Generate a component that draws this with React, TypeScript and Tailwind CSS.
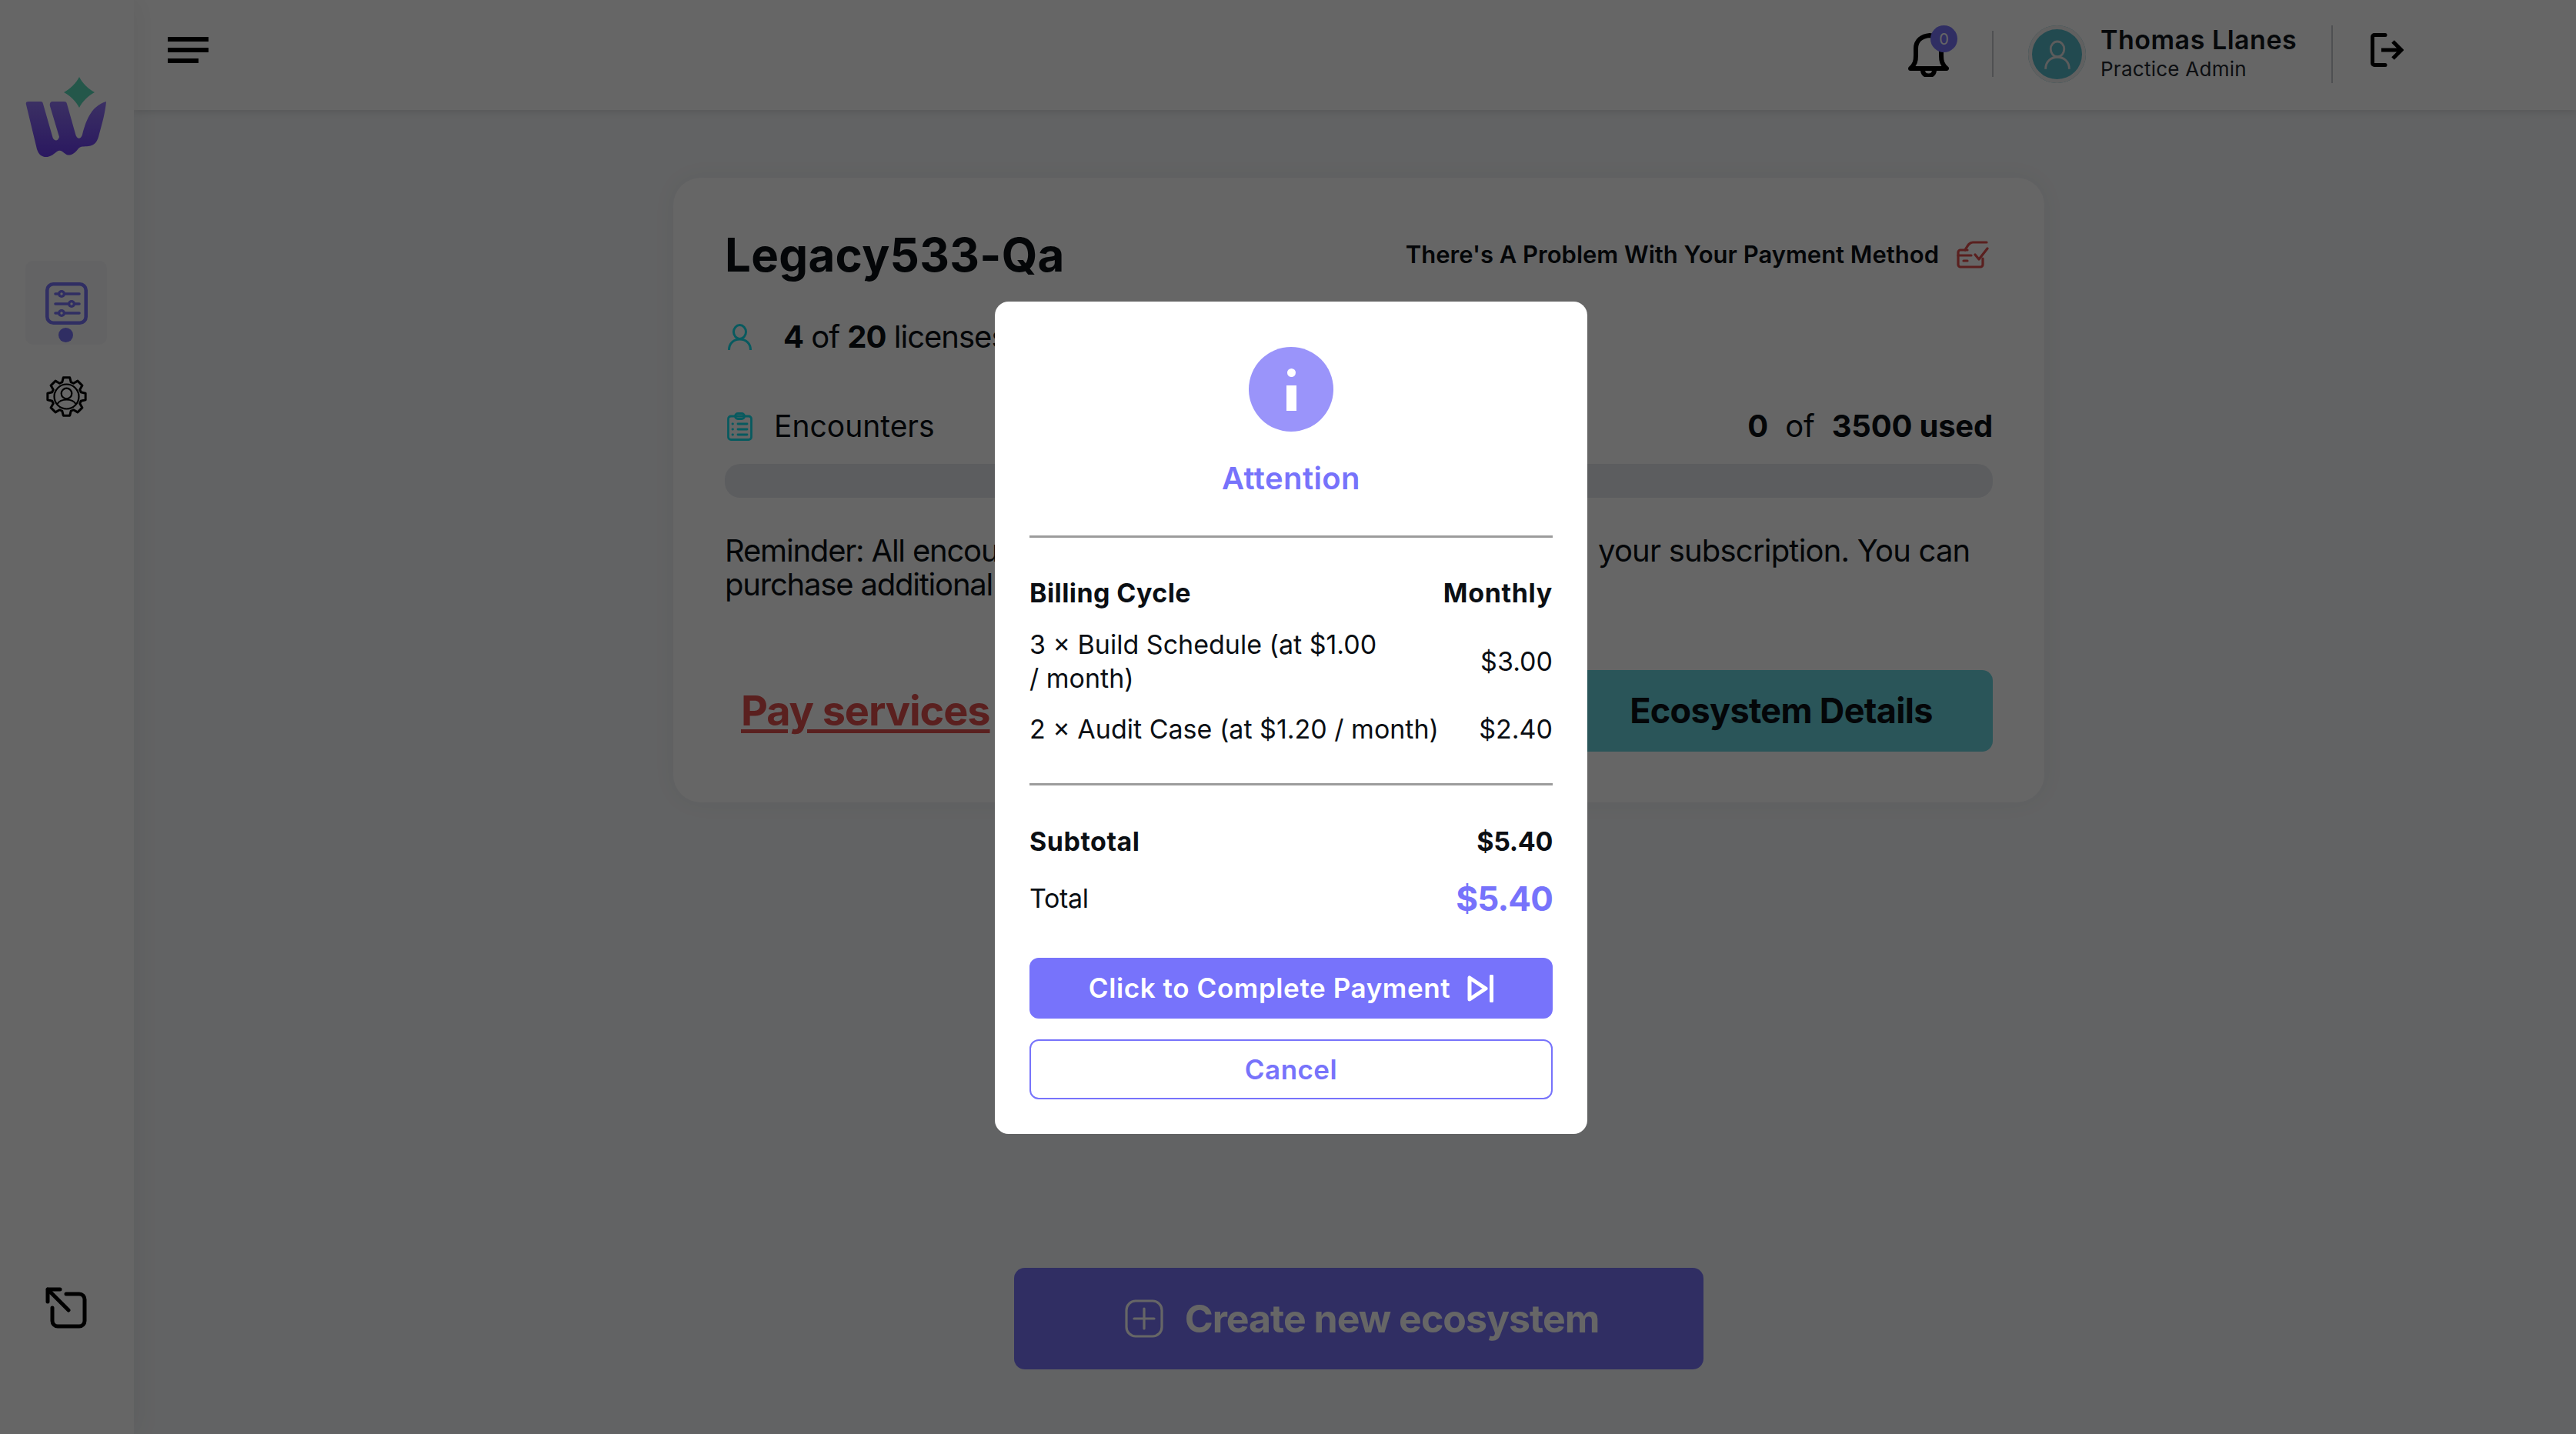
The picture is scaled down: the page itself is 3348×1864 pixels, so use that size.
import React from "react";

const gearPath = (() => {
  const n = 8, c = 27.5, R = 25, r = 19.5;
  const pts: string[] = [];
  for (let i = 0; i < n; i++) {
    const a = (i * 2 * Math.PI) / n - Math.PI / 2;
    const t = 0.17, u = 0.3;
    const p = (ang: number, rad: number) => `${(c + rad * Math.cos(ang)).toFixed(2)} ${(c + rad * Math.sin(ang)).toFixed(2)}`;
    pts.push(`${i === 0 ? "M" : "L"}${p(a - u, r)}`);
    pts.push(`L${p(a - t, R)}`);
    pts.push(`L${p(a + t, R)}`);
    pts.push(`L${p(a + u, r)}`);
    pts.push(`A${r} ${r} 0 0 1 ${p(a + Math.PI / 4 - u, r)}`);
  }
  return pts.join(" ") + "Z";
})();

const Logo = () => (
  <svg width="105" height="104" viewBox="0 0 105 104" className="block">
    <defs>
      <linearGradient id="wg" x1="0" y1="32" x2="0" y2="104" gradientUnits="userSpaceOnUse">
        <stop offset="0" stopColor="#9478f8" />
        <stop offset="1" stopColor="#6a3cf0" />
      </linearGradient>
    </defs>
    <path d="M70 0C74 8 82 16 90 20C82 24 74 32 70 40C66 32 58 24 50 20C58 16 66 8 70 0Z" fill="#5ad9b9" />
    <path
      d="M1 36C0 33 2 32 4 32H20C22 32 22.5 33 23 35L35 77C36 83 42 85 44 78L32 38C31 34 33 32 35 32H50C53 32 53.5 33 54 35L65 74C66.5 81 72 82 74 75C78 60 84 38 105 32C104 45 100 60 96 74C94 84 90 89 82 90C76 90.5 72 90 69 93C64 100 57 104 52 100C48 97 45 94 41 97C36 101 31 105 25 104C20 103 17 100 15 94Z"
      fill="url(#wg)"
    />
  </svg>
);

const SlidersNav = () => (
  <svg width="55" height="55" viewBox="0 0 55 55" fill="none" className="block">
    <rect x="2.3" y="2.3" width="50.4" height="50.4" rx="8" stroke="#7873f8" strokeWidth="4.6" />
    <g stroke="#7873f8" strokeWidth="3.6" strokeLinecap="round">
      <path d="M13 15H44M13 28H44M13 40H44" />
    </g>
    <g fill="#7873f8">
      <circle cx="21" cy="15" r="5" />
      <circle cx="34" cy="28" r="5" />
      <circle cx="21" cy="40" r="5" />
    </g>
    <g fill="#f4f4f6">
      <circle cx="21" cy="15" r="1.7" />
      <circle cx="34" cy="28" r="1.7" />
      <circle cx="21" cy="40" r="1.7" />
    </g>
  </svg>
);

const GearUser = () => (
  <svg width="55" height="55" viewBox="0 0 55 55" fill="none" stroke="#000" className="block">
    <path d={gearPath} strokeWidth="3" strokeLinejoin="round" />
    <circle cx="27.5" cy="27.5" r="16" strokeWidth="2.2" />
    <circle cx="27.5" cy="23.5" r="6.8" strokeWidth="2.2" />
    <path d="M15.500 37C18 33 23 31.500 27.500 31.500C32 31.500 37 33 39.500 37" strokeWidth="2.2" />
  </svg>
);

const ExpandIcon = () => (
  <svg width="54" height="54" viewBox="0 0 54 54" fill="none" stroke="#000" strokeWidth="5" strokeLinecap="round" strokeLinejoin="round" className="block">
    <path d="M27 9H44a7 7 0 0 1 7 7V44a7 7 0 0 1 -7 7H16a7 7 0 0 1 -7 -7V27" />
    <path d="M30 30L3 3M3 3H19M3 3V19" />
  </svg>
);

const Hamburger = () => (
  <div className="flex flex-col gap-[8px] w-[53px]">
    <div className="h-[6px] w-[53px] bg-black" />
    <div className="h-[6px] w-[53px] bg-black" />
    <div className="h-[6px] w-[40px] bg-black" />
  </div>
);

const Bell = () => (
  <svg width="53" height="58" viewBox="0 0 53 58" fill="none" stroke="#000" strokeWidth="6" strokeLinejoin="round" className="block">
    <path d="M3 47C9 42 10 37 10 30V21C10 10 18 5 28 4C38 5 43 11 43 21V30C43 37 44 42 50 47Z" />
    <path d="M19 49C19 59 34 59 34 49" />
  </svg>
);

const UserLine = ({ w, h, color, sw }: { w: number; h: number; color: string; sw: number }) => (
  <svg width={w} height={h} viewBox="0 0 31 34" fill="none" stroke={color} strokeWidth={sw} className="block">
    <ellipse cx="15.5" cy="10.5" rx="8" ry="9" />
    <path d="M1.5 34C1.5 25 8 20 15.5 20C23 20 29.5 25 29.5 34" />
  </svg>
);

const Logout = () => (
  <svg width="43" height="44" viewBox="0 0 43 44" fill="none" stroke="#000" strokeWidth="5" className="block">
    <path d="M19 2.500H5a2.500 2.500 0 0 0 -2.500 2.500V39a2.500 2.500 0 0 0 2.500 2.500H19" strokeLinecap="round" />
    <path d="M14 22H39M29 11L40 22L29 33" />
  </svg>
);

const PaymentIcon = () => (
  <svg width="42" height="36" viewBox="0 0 42 36" fill="none" stroke="#e0504e" strokeWidth="3.2" strokeLinecap="round" strokeLinejoin="round" className="block">
    <path d="M34 23V31a3 3 0 0 1 -3 3H5a3 3 0 0 1 -3 -3V15a3 3 0 0 1 3 -3H14" />
    <path d="M2 19H19" />
    <path d="M11 12C14 7 16 2 21 2H39" />
    <path d="M24 18L29 24L40 10" />
    <path d="M9 26H14" />
  </svg>
);

const Clipboard = () => (
  <svg width="33" height="37" viewBox="0 0 33 37" fill="none" stroke="#16e0ee" strokeWidth="2.8" strokeLinecap="round" className="block">
    <rect x="1.500" y="5" width="30" height="30.500" rx="3.500" />
    <rect x="10.500" y="1.500" width="12" height="7" rx="3.500" />
    <path d="M14 15H26M14 22H26M14 29H26" />
    <path d="M7 15H7.500M7 22H7.500M7 29H7.500" />
  </svg>
);

const SkipIcon = () => (
  <svg width="34" height="36" viewBox="0 0 34 36" fill="none" stroke="#fff" strokeWidth="5" strokeLinejoin="round" strokeLinecap="round" className="block">
    <path d="M3 4V32L24 18Z" />
    <path d="M31.500 2V34" />
  </svg>
);

const PlusBox = () => (
  <svg width="50" height="50" viewBox="0 0 50 50" fill="none" stroke="#fff" strokeWidth="3.2" strokeLinecap="round" className="block">
    <rect x="2" y="2" width="46" height="46" rx="12" />
    <path d="M25 12V38M12 25H38" />
  </svg>
);

const Row = ({ left, right, cls = "" }: { left: React.ReactNode; right: React.ReactNode; cls?: string }) => (
  <div className={`flex items-center justify-between text-[34px] leading-[44px] ${cls}`}>
    <div>{left}</div>
    <div>{right}</div>
  </div>
);

export default function App() {
  return (
    <div className="relative flex h-[1864px] w-[3348px] overflow-hidden bg-[#f5f7f9] text-[#0b0f14] font-['Inter',sans-serif]">
      <aside className="relative z-10 flex w-[174px] shrink-0 flex-col items-center bg-white pt-[100px] pb-[137px] pr-[3px] shadow-[6px_0_30px_rgba(0,0,0,0.05)]">
        <Logo />
        <div className="mt-[135px] flex h-[109px] w-[106px] flex-col items-center rounded-[10px] bg-[#f7f7f9] pt-[28px]">
          <div className="ml-[2px]">
            <SlidersNav />
          </div>
          <div className="mt-[4px] mr-[1px] h-[19px] w-[19px] rounded-full bg-[#7873f8]" />
        </div>
        <div className="mt-[40px] ml-[2px]">
          <GearUser />
        </div>
        <div className="mt-auto">
          <ExpandIcon />
        </div>
      </aside>

      <main className="flex min-w-0 flex-1 flex-col">
        <header className="flex h-[143px] shrink-0 items-start bg-white pl-[44px] pr-[224px] shadow-[0_2px_10px_rgba(0,0,0,0.12)]">
          <div className="mt-[48px]">
            <Hamburger />
          </div>
          <div className="ml-auto flex items-start">
            <div className="relative mt-[42px] h-[58px] w-[53px]">
              <Bell />
              <div className="absolute -top-[9px] left-[29px] flex h-[35px] w-[35px] items-center justify-center rounded-full bg-[#7873f8] text-[20px] leading-none text-white">
                0
              </div>
            </div>
            <div className="ml-[56px] mt-[40px] h-[60px] w-[2px] bg-[#c5c9ce]" />
            <div className="ml-[45px] mt-[33px] flex h-[75px] w-[75px] items-center justify-center rounded-full bg-[#55b9c8] ring-[5px] ring-inset ring-[#f1f1f1]">
              <UserLine w={34} h={38} color="#e6e6e6" sw={2.6} />
            </div>
            <div className="ml-[19px] mt-[31px] flex w-[255px] flex-col whitespace-nowrap">
              <div className="text-[34px] leading-[42px] font-semibold tracking-[0.015em] text-[#101419]">Thomas Llanes</div>
              <div className="mt-[1px] text-[26px] leading-[32px] tracking-[0.01em] text-[#22272e]">Practice Admin</div>
            </div>
            <div className="ml-[45px] mt-[33px] h-[75px] w-[2px] bg-[#c5c9ce]" />
            <div className="ml-[49px] mt-[43px]">
              <Logout />
            </div>
          </div>
        </header>

        <div className="ml-[701px] flex w-[1782px] flex-col items-center pt-[88px]">
          <section className="w-full rounded-[36px] bg-white pt-[64px] pb-[66px] pl-[67px] pr-[67px] shadow-[0_0_30px_rgba(0,0,0,0.05)]">
            <div className="flex items-start justify-between">
              <h1 className="text-[60px] leading-[72px] font-bold tracking-[0.005em]">Legacy533-Qa</h1>
              <div className="mt-[16px] flex items-center">
                <span className="text-[31px] leading-[40px] font-semibold tracking-[0]">There's A Problem With Your Payment Method</span>
                <span className="ml-[23px] mr-[5px]">
                  <PaymentIcon />
                </span>
              </div>
            </div>

            <div className="mt-[47px] flex h-[48px] items-center pl-[4px]">
              <UserLine w={31} h={34} color="#16e0ee" sw={3} />
              <div className="ml-[41px] whitespace-nowrap text-[40px] leading-[48px] tracking-[-0.025em]">
                <b className="font-bold">4</b> of <b className="font-bold">20</b> licenses used
              </div>
            </div>

            <div className="mt-[68px] flex h-[48px] items-center justify-between">
              <div className="flex items-center pl-[3px]">
                <Clipboard />
                <span className="ml-[28px] text-[39px] leading-[48px] tracking-[0]">Encounters</span>
              </div>
              <div className="whitespace-pre text-[40px] leading-[48px] tracking-[-0.005em]">
                <b className="font-bold">0</b>  of  <b className="font-bold">3500 used</b>
              </div>
            </div>

            <div className="mt-[25px] h-[44px] rounded-[20px] bg-[#e6e9ee]" />

            <p className="mt-[47px] whitespace-nowrap text-[40px] leading-[44px] tracking-[-0.03em]">
              Reminder: All encounters included in your plan are all valid until{" "}
              <span className="ml-[10px] tracking-[-0.02em]">your subscription. You can</span>
              <br />
              purchase additional
            </p>

            <div className="mt-[89px] flex items-center justify-between">
              <a className="pl-[21px] text-[54px] leading-[64px] font-bold tracking-[-0.02em] text-[#e1504e] underline underline-offset-[5px] decoration-[5px]">
                Pay services
              </a>
              <button className="flex h-[106px] w-[550px] items-center justify-center rounded-[14px] bg-[#69d4de] text-[45px] font-bold tracking-[-0.015em]">
                Ecosystem Details
              </button>
            </div>
          </section>

          <button className="mt-[605px] flex h-[132px] w-[896px] items-center justify-center rounded-[14px] bg-[#7873f8] pl-[8px] text-[50px] font-bold tracking-[-0.02em] text-white">
            <PlusBox />
            <span className="ml-[28px]">Create new ecosystem</span>
          </button>
        </div>
      </main>

      <div className="fixed inset-0 z-20 flex items-center justify-center bg-black/60">
        <div className="ml-[8px] mt-[2px] h-[1082px] w-[770px] rounded-[18px] bg-white px-[45px] pt-[59px] text-[#0b0f14]">
          <div className="flex flex-col items-center">
            <div className="flex h-[110px] w-[110px] flex-col items-center justify-center rounded-full bg-[#9a94fa]">
              <div className="h-[11px] w-[11px] rounded-full bg-white" />
              <div className="mt-[11px] h-[33px] w-[13px] bg-white" />
            </div>
            <div className="mt-[36px] text-[40px] leading-[50px] font-semibold tracking-[0.01em] text-[#7773fb]">Attention</div>
          </div>
          <div className="mt-[49px] h-[3px] bg-[#9c9c9c]" />
          <Row
            cls="mt-[50px] font-bold"
            left={<span className="tracking-[0.012em]">Billing Cycle</span>}
            right={<span className="tracking-[0.02em]">Monthly</span>}
          />
          <Row cls="mt-[23px]" left={<div className="w-[460px]">3 × Build Schedule (at $1.00 / month)</div>} right="$3.00" />
          <Row cls="mt-[22px]" left="2 × Audit Case (at $1.20 / month)" right="$2.40" />
          <div className="mt-[48px] h-[3px] bg-[#9c9c9c]" />
          <Row
            cls="mt-[51px] font-bold"
            left={<span className="tracking-[0.015em]">Subtotal</span>}
            right={<span className="tracking-[-0.01em]">$5.40</span>}
          />
          <div className="mt-[24px] flex h-[56px] items-center justify-between">
            <span className="text-[34px] leading-[44px] tracking-[-0.01em]">Total</span>
            <span className="text-[44px] leading-[56px] font-bold tracking-[-0.02em] text-[#7773fb]">$5.40</span>
          </div>
          <button className="mt-[49px] flex h-[79px] w-full items-center justify-center rounded-[12px] bg-[#7773fb] text-[35px] font-semibold tracking-[0.017em] text-white">
            <span>Click to Complete Payment</span>
            <span className="ml-[22px]">
              <SkipIcon />
            </span>
          </button>
          <button className="mt-[27px] flex h-[78px] w-full items-center justify-center rounded-[12px] border-[2px] border-[#7773fb] text-[35px] font-semibold tracking-[0.013em] text-[#7773fb]">
            Cancel
          </button>
        </div>
      </div>
    </div>
  );
}
